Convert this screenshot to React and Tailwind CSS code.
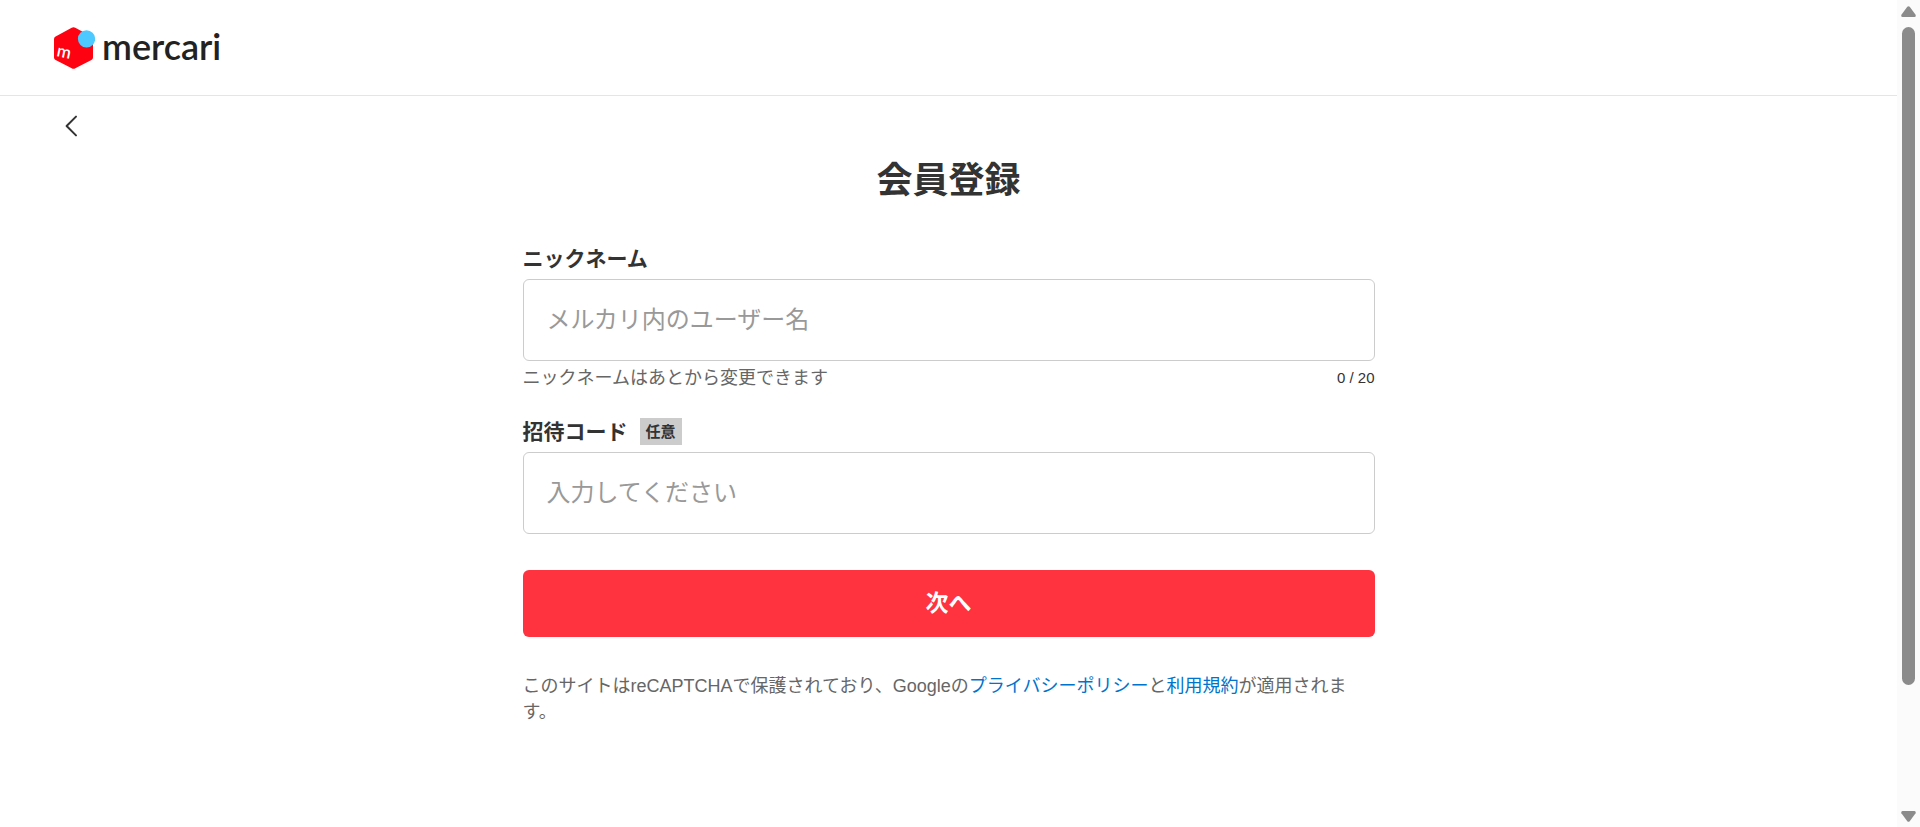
import React, { useState } from "react";

function Logo() {
  return (
    <a href="#" aria-label="mercari" className="flex items-center gap-[7px]">
      <svg width="41" height="42" viewBox="0 0 41 42" aria-hidden="true">
        <path
          d="M17.7 0.8 Q19.5 -0.2 21.3 0.8 L37.4 9.4 Q39 10.3 39 12 V30.4 Q39 32.1 37.4 33 L21.3 41.2 Q19.5 42.2 17.7 41.2 L1.6 33 Q0 32.1 0 30.4 V12 Q0 10.3 1.6 9.4 Z"
          fill="#ff0211"
        />
        <circle cx="32.5" cy="11.8" r="8.6" fill="#4dc9ff" />
        <text
          x="2"
          y="29"
          transform="rotate(12 2 29)"
          fill="#ffffff"
          className="font-['Lato',sans-serif] text-[17px] font-semibold"
        >
          m
        </text>
      </svg>
      <span className="pb-1 font-['Lato',sans-serif] text-[36px] leading-[38px] font-semibold text-[#222222]">
        mercari
      </span>
    </a>
  );
}

function TextField({ id, label, badge, placeholder, helper, limit }) {
  const [value, setValue] = useState("");
  return (
    <div>
      <div className="mb-[7px] flex h-[27px] items-center gap-3">
        <label htmlFor={id} className="text-[21px] leading-[27px] font-bold">
          {label}
        </label>
        {badge && (
          <span className="bg-[#cccccc] px-1.5 text-[15px] leading-[27px] font-bold">{badge}</span>
        )}
      </div>
      <input
        id={id}
        type="text"
        maxLength={limit}
        value={value}
        onChange={(e) => setValue(e.target.value)}
        placeholder={placeholder}
        className="block h-[82px] w-full rounded-[6px] border border-[#cccccc] bg-white px-[23px] text-[24px] placeholder:text-[#999999]"
      />
      {helper && (
        <div className="mt-1 flex items-center justify-between leading-[26px]">
          <p className="text-[18px] text-[#666666]">{helper}</p>
          <p className="text-[15px]">
            {value.length} / {limit}
          </p>
        </div>
      )}
    </div>
  );
}

function ScrollBar() {
  return (
    <div
      aria-hidden="true"
      className="sticky top-0 flex h-screen w-[23px] shrink-0 flex-col items-center bg-[#fbfbfb] pt-1.5 pb-[5px]"
    >
      <svg width="15" height="11" viewBox="0 0 15 11">
        <path d="M6.3 0.8 Q7.5 -0.4 8.7 0.8 L14.6 8.8 Q15.2 10.8 13.5 11 H1.5 Q-0.2 10.8 0.4 8.8 Z" fill="#8b8b8b" />
      </svg>
      <div className="my-2.5 flex w-[13px] grow flex-col">
        <div className="h-[85%] rounded-full bg-[#8b8b8b]" />
      </div>
      <svg width="15" height="11" viewBox="0 0 15 11">
        <path d="M6.3 10.2 Q7.5 11.4 8.7 10.2 L14.6 2.2 Q15.2 0.2 13.5 0 H1.5 Q-0.2 0.2 0.4 2.2 Z" fill="#8b8b8b" />
      </svg>
    </div>
  );
}

export default function App() {
  return (
    <div
      lang="ja"
      className="flex min-h-screen bg-white font-['Liberation_Sans','Noto_Sans_CJK_JP',sans-serif] text-[#333333]"
    >
      <div className="min-w-0 grow">
        <header className="flex h-24 items-center border-b border-[#e5e5e5] px-[54px]">
          <Logo />
        </header>
        <div className="flex h-[60px] items-center px-[54px]">
          <button type="button" aria-label="戻る" className="p-1.5">
            <svg width="24" height="24" viewBox="0 0 24 24" fill="none" aria-hidden="true">
              <path
                d="M16 2.6 L6.6 12 L16 21.4"
                stroke="#333333"
                strokeWidth="2"
                strokeLinecap="round"
                strokeLinejoin="round"
              />
            </svg>
          </button>
        </div>
        <main className="mx-auto max-w-[852px]">
          <h1 className="text-center text-[36px] leading-[50px] font-bold">会員登録</h1>
          <form className="mt-[39px] flex flex-col" onSubmit={(e) => e.preventDefault()}>
            <TextField
              id="nickname"
              label="ニックネーム"
              placeholder="メルカリ内のユーザー名"
              helper="ニックネームはあとから変更できます"
              limit={20}
            />
            <div className="mt-[27px]">
              <TextField id="invite" label="招待コード" badge="任意" placeholder="入力してください" />
            </div>
            <button
              type="submit"
              className="mt-9 h-[67px] w-full rounded-[6px] bg-[#ff333f] text-[23px] font-bold text-white"
            >
              次へ
            </button>
          </form>
          <p className="mt-9 text-[18px] leading-[26px] text-[#666666]">
            このサイトはreCAPTCHAで保護されており、Googleの
            <a href="#" className="text-[#0073cc]">プライバシーポリシー</a>と
            <a href="#" className="text-[#0073cc]">利用規約</a>が適用されます。
          </p>
        </main>
      </div>
      <ScrollBar />
    </div>
  );
}
